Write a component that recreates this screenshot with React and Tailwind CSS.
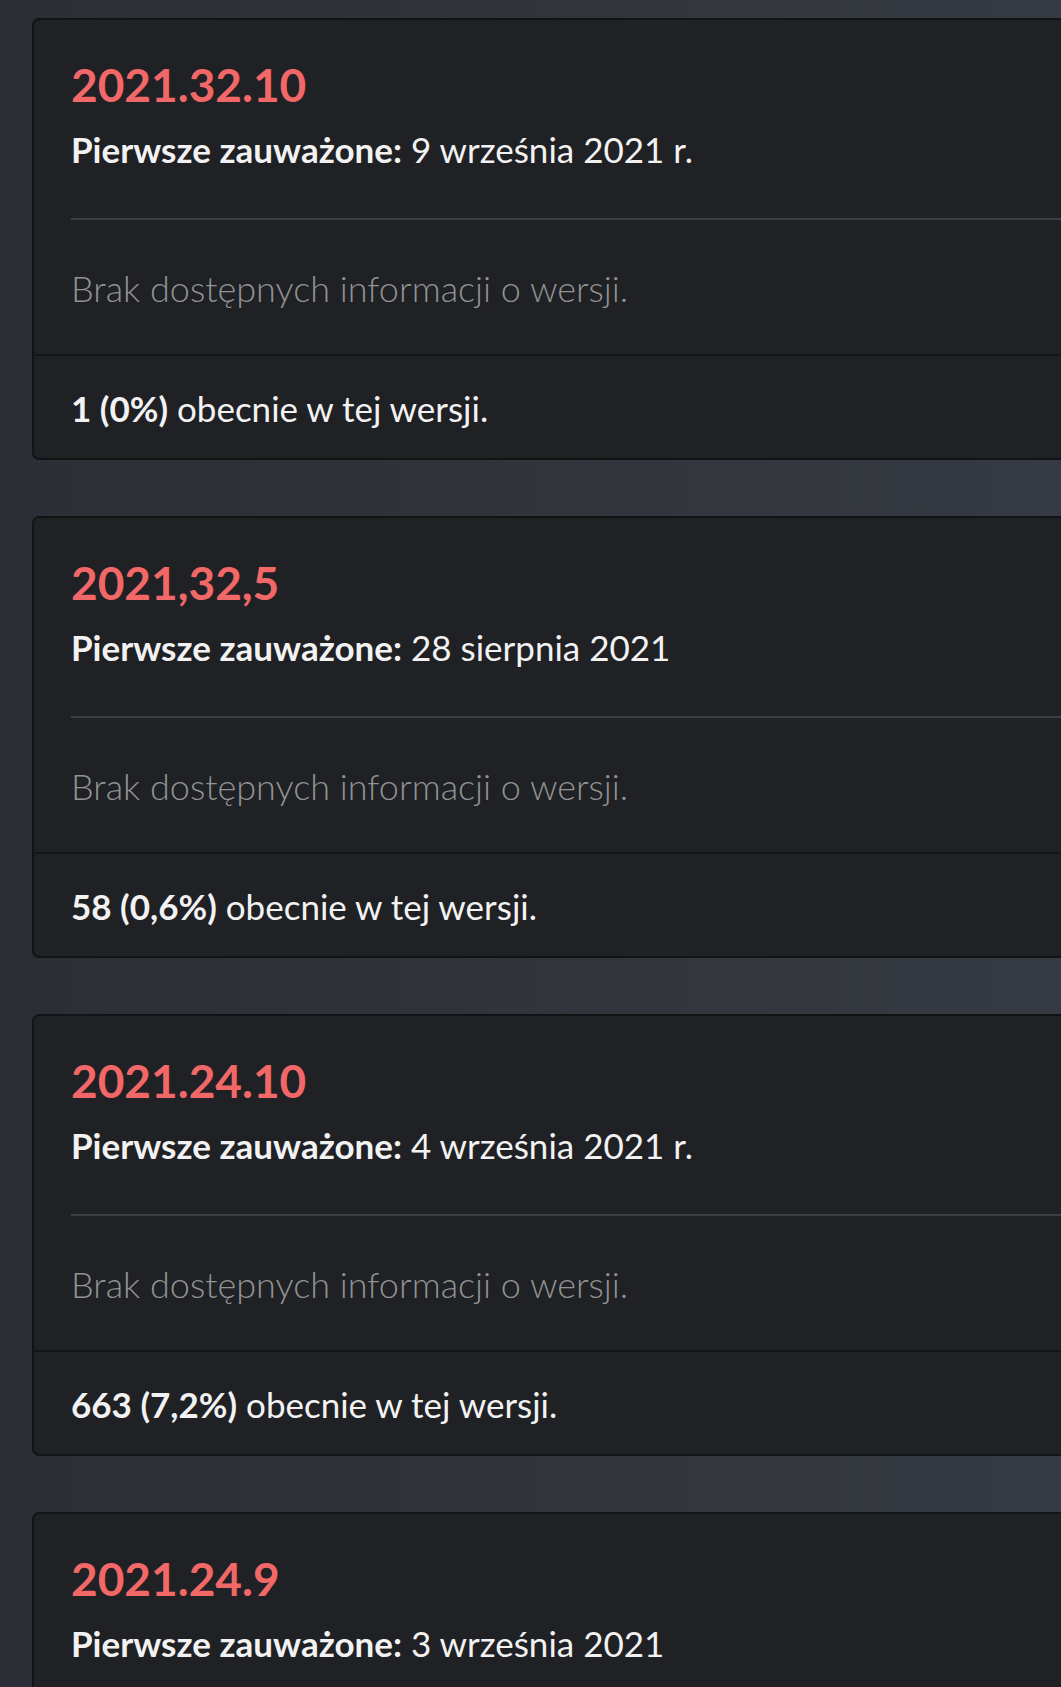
import React from 'react';

const versions = [
  { name: '2021.32.10', seen: '9 września 2021 r.', count: '1 (0%)' },
  { name: '2021,32,5', seen: '28 sierpnia 2021', count: '58 (0,6%)' },
  { name: '2021.24.10', seen: '4 września 2021 r.', count: '663 (7,2%)' },
  { name: '2021.24.9', seen: '3 września 2021', count: '12 (0,1%)' },
];

function VersionCard({ version }) {
  return (
    <div className="w-[1040px] ml-[32px] rounded-[7px] border-2 border-[#121314] bg-[#1f2124] overflow-hidden">
      {/* Header */}
      <div className="pl-[37px] pt-[35px]">
        <h2 className="text-[46px] leading-[60px] font-bold text-[#f26868]">{version.name}</h2>
        <p className="mt-[12px] text-[35px] leading-[44px] text-[#f2f2f2]">
          <span className="font-bold">Pierwsze zauważone:</span> {version.seen}
        </p>
        <div className="mt-[47px] h-[2px] bg-[#3b3e42]" />
      </div>

      {/* Release notes */}
      <div className="pl-[37px] pt-[46px] pb-[44px] text-[36px] leading-[44px] font-light text-[#929394]">
        Brak dostępnych informacji o wersji.
      </div>

      {/* Footer */}
      <div className="border-t-2 border-[#151618] pl-[37px] pt-[30px] pb-[28px] text-[35px] leading-[44px] text-[#f2f2f2]">
        <span className="font-bold">{version.count}</span> obecnie w tej wersji.
      </div>
    </div>
  );
}

export default function App() {
  return (
    <div
      className="h-[1687px] overflow-hidden bg-gradient-to-r from-[#2b2e34] to-[#363a42] pt-[18px]"
      style={{ fontFamily: 'Lato, "Noto Sans", sans-serif' }}
    >
      <div className="flex flex-col gap-[56px]">
        {versions.map((v) => (
          <VersionCard key={v.name} version={v} />
        ))}
      </div>
    </div>
  );
}
